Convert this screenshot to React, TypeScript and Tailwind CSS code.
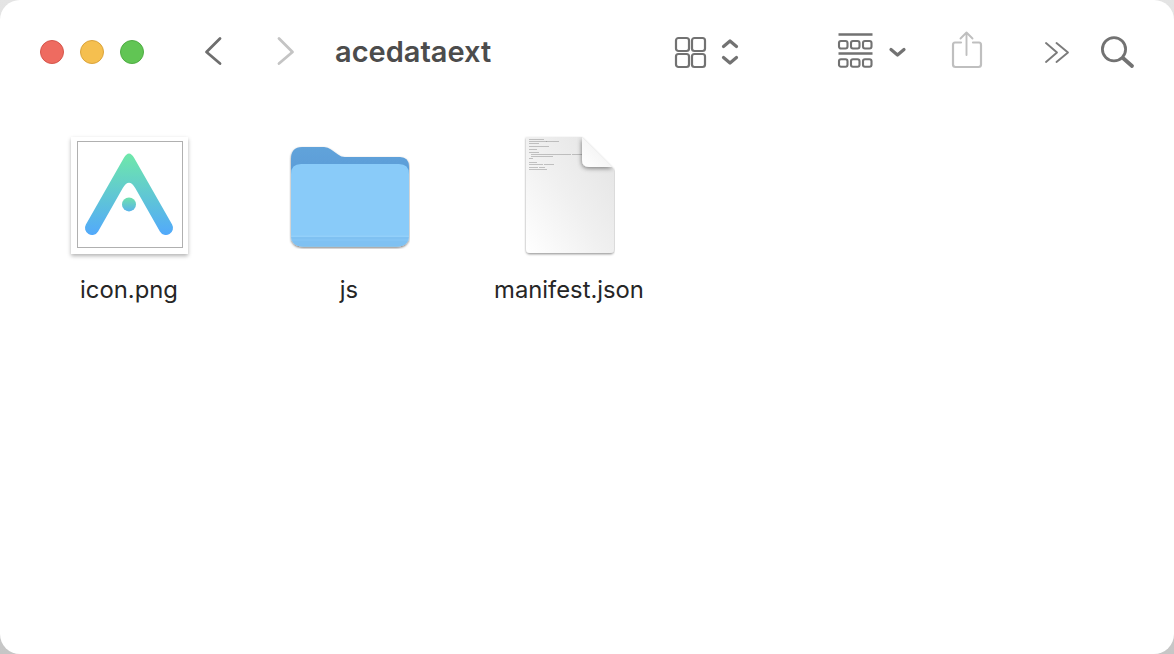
const ICON = '#727272';
const DIM = '#bfbfbf';

function ToolbarIcon({ width, className, children }: { width: number; className?: string; children: React.ReactNode }) {
  // every toolbar drawing shares one 44px tall box, so y values line up across icons
  return (
    <svg width={width} height={44} viewBox={`0 0 ${width} 44`} fill="none" strokeLinecap="round" strokeLinejoin="round" className={className}>
      {children}
    </svg>
  );
}

function Toolbar() {
  return (
    <div className="flex h-[104px] items-center pl-[40px]">
      <div className="flex gap-4">
        <span className="h-6 w-6 rounded-full border border-[#d5564b] bg-[#ee6b60]" />
        <span className="h-6 w-6 rounded-full border border-[#dba43c] bg-[#f5bf4f]" />
        <span className="h-6 w-6 rounded-full border border-[#4fad43] bg-[#61c554]" />
      </div>

      <ToolbarIcon width={20} className="ml-[59px]">
        <path d="M17 8.5 L3.5 22 L17 33.5" stroke="#6e6e6e" strokeWidth={2.8} />
      </ToolbarIcon>
      <ToolbarIcon width={20} className="ml-[53px]">
        <path d="M3 8.5 L16.5 22 L3 33.5" stroke="#c4c4c4" strokeWidth={2.8} />
      </ToolbarIcon>

      <div className="mb-[2px] ml-[39px] w-[338px] font-['Inter',sans-serif] text-[29px] font-semibold leading-none text-[#4c4c4c]">
        acedataext
      </div>

      <ToolbarIcon width={67}>
        <g stroke={ICON} strokeWidth={2.2}>
          <rect x="3" y="8" width="13" height="13" rx="2.5" />
          <rect x="19" y="8" width="13" height="13" rx="2.5" />
          <rect x="3" y="24" width="13" height="13" rx="2.5" />
          <rect x="19" y="24" width="13" height="13" rx="2.5" />
        </g>
        <path d="M50.5 16.5 L57 11 L63.5 16.5 M50.5 27.5 L57 33 L63.5 27.5" stroke={ICON} strokeWidth={3.2} />
      </ToolbarIcon>

      <ToolbarIcon width={72} className="ml-[96px]">
        <g stroke={ICON}>
          <path d="M2.5 4.5 H36.5 M2.5 23.5 H36.5" strokeWidth={2.4} strokeLinecap="butt" />
          <g strokeWidth={2.1}>
            <rect x="3" y="11" width="8.5" height="7.5" rx="2" />
            <rect x="15" y="11" width="8.5" height="7.5" rx="2" />
            <rect x="27" y="11" width="8.5" height="7.5" rx="2" />
            <rect x="3" y="29.2" width="8.5" height="7.5" rx="2" />
            <rect x="15" y="29.2" width="8.5" height="7.5" rx="2" />
            <rect x="27" y="29.2" width="8.5" height="7.5" rx="2" />
          </g>
        </g>
        <path d="M55 19.5 L61.5 25 L68 19.5" stroke={ICON} strokeWidth={3.2} />
      </ToolbarIcon>

      <ToolbarIcon width={34} className="ml-[42px]">
        <path d="M11 12.5 H5 Q3 12.5 3 15 V34.5 Q3 37 5.5 37 H28.5 Q31 37 31 34.5 V15 Q31 12.5 29 12.5 H23" stroke={DIM} strokeWidth={2.2} />
        <path d="M16.5 25 V2.5 M10.5 8.5 L16.5 2.5 L22.5 8.5" stroke={DIM} strokeWidth={1.9} />
      </ToolbarIcon>

      <ToolbarIcon width={28} className="ml-[58px]">
        <path d="M4 13 L15 22.5 L4 32 M14.5 13 L26 22.5 L14.5 32" stroke="#7b7b7b" strokeWidth={1.9} />
      </ToolbarIcon>

      <ToolbarIcon width={36} className="ml-[30px]">
        <circle cx="14" cy="19.3" r="11.6" stroke={ICON} strokeWidth={2.8} />
        <path d="M23.5 28.5 L32 36" stroke={ICON} strokeWidth={3.8} />
      </ToolbarIcon>
    </div>
  );
}

function PngThumb() {
  return (
    <div className="mt-[1px] h-[117px] w-[117px] bg-white pl-[6px] pt-[4px] shadow-[0_2px_4px_rgba(0,0,0,0.3)]">
      <div className="h-[107px] w-[106px] border border-[#b0b0b0]">
        <svg width={104} height={105} viewBox="78 142 104 105" className="block">
          <defs>
            <linearGradient id="logoBody" x1="0" y1="153" x2="0" y2="235" gradientUnits="userSpaceOnUse">
              <stop offset="0" stopColor="#6fe8a9" />
              <stop offset="1" stopColor="#52a9fb" />
            </linearGradient>
            <linearGradient id="logoDot" x1="0" y1="197" x2="0" y2="212" gradientUnits="userSpaceOnUse">
              <stop offset="0" stopColor="#6fe3a9" />
              <stop offset="1" stopColor="#5ab2ee" />
            </linearGradient>
          </defs>
          <path
            d="M85.9 224.5 L123.8 158 Q129 148.9 134.2 158 L172.1 224.5 A7 7 0 0 1 159.9 231.5 L135.2 188.1 Q129 177.3 122.8 188.1 L98.1 231.5 A7 7 0 0 1 85.9 224.5 Z"
            fill="url(#logoBody)"
          />
          <circle cx="129" cy="204.4" r="7" fill="url(#logoDot)" />
        </svg>
      </div>
    </div>
  );
}

function FolderIcon() {
  return (
    <svg width={122} height={104} viewBox="0 0 122 104" className="mt-[9px] block">
      <defs>
        <linearGradient id="folderBack" x1="0" y1="0" x2="0" y2="1">
          <stop offset="0" stopColor="#62a3da" />
          <stop offset="1" stopColor="#4f94d6" />
        </linearGradient>
        <filter id="folderShadow" x="-5%" y="-5%" width="110%" height="112%">
          <feDropShadow dx="0" dy="1.2" stdDeviation="1" floodColor="#000" floodOpacity="0.5" />
        </filter>
      </defs>
      <g transform="translate(3 2)" filter="url(#folderShadow)">
        <path
          d="M0 12 Q0 0 11 0 H33 Q37 0 40 2.5 L47 7.5 Q50 10 54 10 H109 Q118 10 118 20 V60 H0 Z"
          fill="url(#folderBack)"
        />
        <path d="M0 27 Q0 17 10 17 H108 Q118 17 118 27 V87 Q118 99.5 106 99.5 H12 Q0 99.5 0 87 Z" fill="#89cbf9" />
        <path d="M0 89 H118 V87 Q118 99.5 106 99.5 H12 Q0 99.5 0 87 Z" fill="#7fc1f2" />
        <rect x="0" y="88.5" width="118" height="1.5" fill="#93d0fa" />
        <rect x="0" y="92.5" width="118" height="1" fill="#88c8f5" />
      </g>
    </svg>
  );
}

// x, y, width of the illegible preview lines on the page thumbnail
const PREVIEW_LINES = [
  [3, 3, 15], [3, 5, 18], [20, 5, 13], [3, 7, 10], [3, 10, 12], [15, 10, 8],
  [3, 13, 8], [3, 16, 10], [5, 18, 40], [46, 18, 10], [5, 20, 22], [3, 22, 4],
  [3, 26, 8], [3, 28, 14], [18, 28, 10], [3, 31, 9], [13, 31, 6], [3, 33, 18],
];

function DocIcon() {
  return (
    <svg width={92} height={124} viewBox="0 0 92 124" className="block">
      <defs>
        <linearGradient id="docFace" x1="0" y1="1" x2="1" y2="0.1">
          <stop offset="0" stopColor="#ffffff" />
          <stop offset="0.5" stopColor="#f0f0f0" />
          <stop offset="1" stopColor="#e4e4e4" />
        </linearGradient>
        <linearGradient id="docFold" x1="0" y1="1" x2="1" y2="0">
          <stop offset="0" stopColor="#ffffff" />
          <stop offset="1" stopColor="#ececec" />
        </linearGradient>
        <filter id="docShadow" x="-6%" y="-4%" width="112%" height="110%">
          <feDropShadow dx="0" dy="1.2" stdDeviation="1.2" floodColor="#000" floodOpacity="0.42" />
        </filter>
        <filter id="foldShadow" x="-30%" y="-30%" width="160%" height="160%">
          <feDropShadow dx="-0.5" dy="1.5" stdDeviation="2" floodColor="#000" floodOpacity="0.45" />
        </filter>
        <clipPath id="docClip">
          <path d="M0 1 H56 L88 33 V113 Q88 117 84 117 H4 Q0 117 0 113 Z" />
        </clipPath>
      </defs>
      <g transform="translate(3 0)">
        <path
          d="M0 1 H56 L88 33 V113 Q88 117 84 117 H4 Q0 117 0 113 Z"
          fill="url(#docFace)"
          filter="url(#docShadow)"
        />
        {PREVIEW_LINES.map(([x, y, w], i) => (
          <rect key={i} x={x} y={y} width={w} height={0.8} fill="#8b8b8b" opacity={0.6} />
        ))}
        <g clipPath="url(#docClip)">
          <path d="M56 1 V24 Q56 31 63 31 H87.5 Z" fill="url(#docFold)" filter="url(#foldShadow)" />
        </g>
      </g>
    </svg>
  );
}

function FileItem({ label, children }: { label: string; children: React.ReactNode }) {
  return (
    <div className="flex w-[220px] flex-col items-center">
      <div className="flex h-[124px] items-start justify-center">{children}</div>
      <div className="mt-[16px] font-['Inter',sans-serif] text-[23.8px] leading-[28px] text-[#262626]">{label}</div>
    </div>
  );
}

export default function App() {
  return (
    <div className="h-[654px] w-[1174px] overflow-hidden bg-gradient-to-b from-[#e4e4e4] to-[#c6c6c6]">
      <div className="h-full rounded-[20px] bg-white">
        <Toolbar />
        <div className="flex pl-[19px] pt-[32px]">
          <FileItem label="icon.png">
            <PngThumb />
          </FileItem>
          <FileItem label="js">
            <FolderIcon />
          </FileItem>
          <FileItem label="manifest.json">
            <DocIcon />
          </FileItem>
        </div>
      </div>
    </div>
  );
}
